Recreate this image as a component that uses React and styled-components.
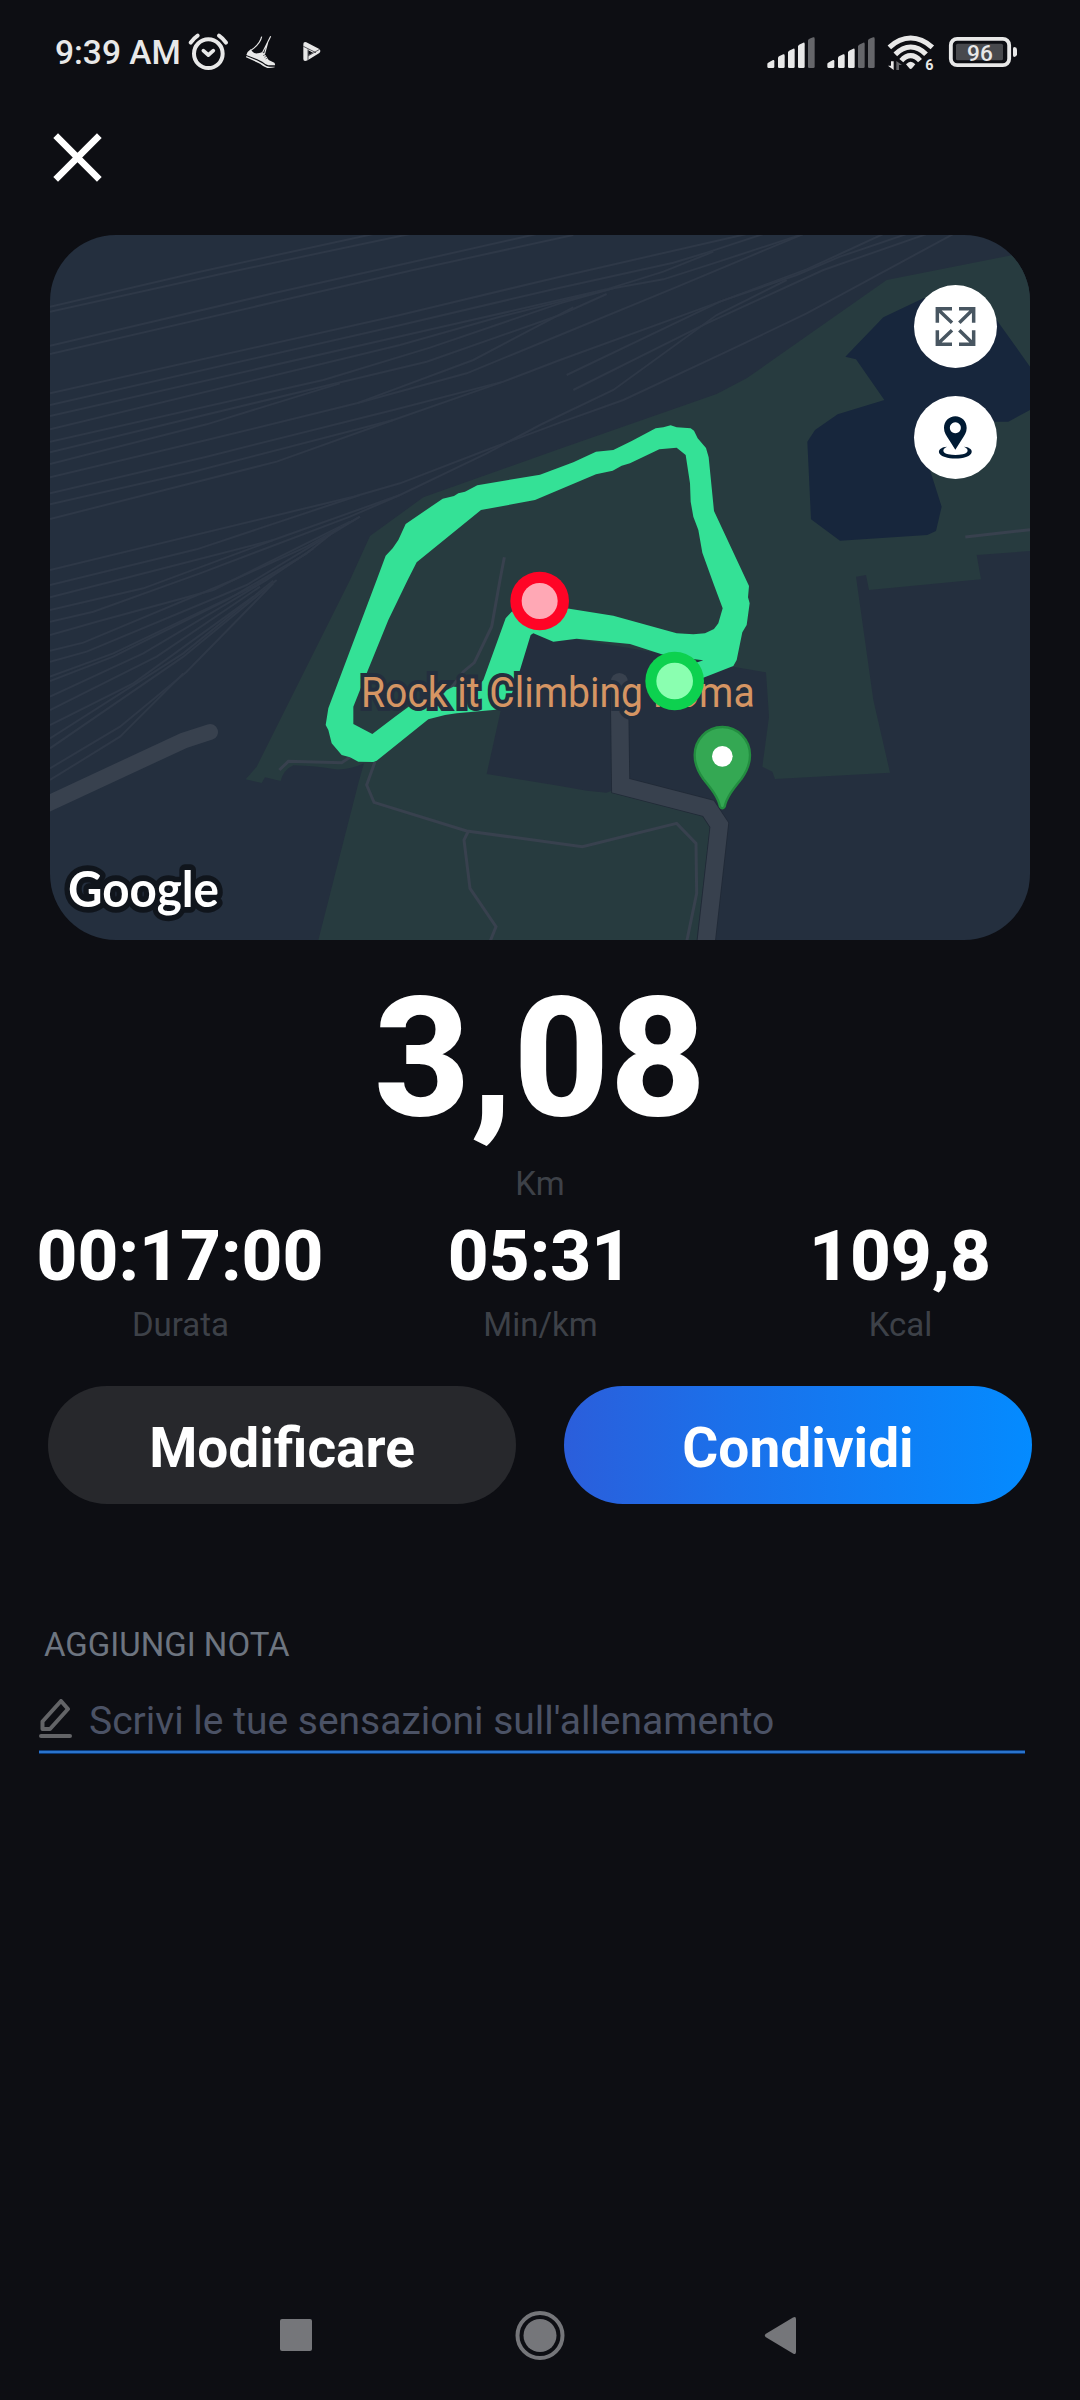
import React from "react";
import styled, { createGlobalStyle } from "styled-components";

const GlobalStyle = createGlobalStyle`
  * { box-sizing: border-box; }
  body { margin: 0; background: #0d0e13; }
  svg { display: block; }
`;

const Screen = styled.main`
  width: 1080px;
  height: 2400px;
  display: flex;
  flex-direction: column;
  background: #0d0e13;
  color: #fff;
  font-family: Roboto, "Liberation Sans", sans-serif;
  overflow: hidden;
`;

const StatusBar = styled.header`
  height: 105px;
  padding: 30px 60px 30px 55px;
  display: flex;
  justify-content: space-between;
`;

const StatusGroup = styled.div`
  display: flex;
`;

const IconGroup = styled(StatusGroup)`
  gap: 10px;
`;

const Clock = styled.span`
  width: 132px;
  font-size: 33.5px;
  font-weight: 500;
  line-height: 46px;
  color: #e8e8e8;
  white-space: nowrap;
`;

const StatusIcon = styled.svg`
  width: ${(p) => p.$w}px;
  height: 45px;
  margin-left: ${(p) => p.$ml || 0}px;
  fill: #e8e8e8;
`;

const TopBar = styled.div`
  height: 130px;
  padding: 25px 50px;
`;

const CloseButton = styled.button`
  width: 55px;
  height: 55px;
  padding: 0;
  border: 0;
  background: none;
`;

const MapCard = styled.section`
  position: relative;
  width: 980px;
  height: 705px;
  margin: 0 50px;
  border-radius: 66px;
  overflow: hidden;
  background: #242f3e;
`;

const MapControls = styled.div`
  position: absolute;
  top: 50px;
  right: 33px;
  display: flex;
  flex-direction: column;
  gap: 28px;
`;

const MapButton = styled.button`
  width: 83px;
  height: 83px;
  padding: 0;
  border: 0;
  border-radius: 50%;
  background: #fff;
`;

const Distance = styled.section`
  height: 263px;
  padding-top: 20px;
  display: flex;
  flex-direction: column;
  align-items: center;
`;

const DistanceValue = styled.div`
  font-size: 167px;
  line-height: 197px;
  font-weight: 800;
`;

const Label = styled.div`
  font-size: 33px;
  line-height: 40px;
  color: #3d4148;
`;

const DistanceLabel = styled(Label)`
  margin-top: 7px;
`;

const Stats = styled.section`
  display: grid;
  grid-template-columns: repeat(3, 360px);
  height: 183px;
  padding-top: 11px;
`;

const Stat = styled.div`
  display: flex;
  flex-direction: column;
  align-items: center;
`;

const StatValue = styled.div`
  font-size: 71px;
  line-height: 84px;
  font-weight: 800;
`;

const StatLabel = styled(Label)`
  margin: 7px 0 0 1px;
`;

const Actions = styled.section`
  display: flex;
  gap: 48px;
  padding: 0 48px;
`;

const ActionButton = styled.button`
  flex: 1;
  height: 118px;
  padding: 6px 0 0;
  border: 0;
  border-radius: 59px;
  background: ${(p) => (p.$primary ? "linear-gradient(90deg, #2b5edb, #1b70ea 35%, #048bff)" : "#27282c")};
  color: #fff;
  font: 700 55px/64px Roboto, "Liberation Sans", sans-serif;
`;

const Note = styled.section`
  padding: 121px 55px 0 39px;
`;

const NoteTitle = styled.h2`
  margin: 0 0 0 5px;
  font-size: 33px;
  line-height: 40px;
  font-weight: 400;
  color: #6d7580;
`;

const NoteField = styled.div`
  display: flex;
  align-items: flex-start;
  height: 85px;
  padding-top: 34px;
`;

const NoteUnderline = styled.div`
  height: 4px;
  border: solid #0b3a78;
  border-width: 1px 0;
  background: #2a74cd;
`;

const PencilIcon = styled.svg`
  width: 33px;
  height: 40px;
  margin-right: 17px;
`;

const Placeholder = styled.span`
  font-size: 39px;
  line-height: 44px;
  color: #4b5265;
  white-space: nowrap;
`;

const NavBar = styled.nav`
  margin-top: auto;
  height: 130px;
  padding: 0 284px 0 280px;
  display: grid;
  grid-template-columns: 1fr auto 1fr;
  align-items: center;
`;

const NavIcon = styled.svg`
  height: 50px;
  width: ${(p) => p.$w}px;
  justify-self: ${(p) => p.$align || "center"};
  fill: #75767a;
`;

const TRACKS = [
  "M30 260L480 155L1000 42", "M30 275L560 158L1110 42", "M30 377L700 220L1490 42",
  "M30 402L740 238L1120 150L1600 45", "M30 520L1080 285L1560 170L2120 42",
  "M30 555L1060 320L1560 203L1900 128L2000 98L2170 42", "M30 588L1200 322L1700 208L1870 155L2020 95",
  "M30 628L1080 375L1380 290L1720 205L1870 178L2020 130L2290 42", "M30 665L850 480L1170 383L1560 250L1720 205",
  "M30 697L880 492L1160 425L1560 285L1700 222", "M30 732L500 613L900 490",
  "M30 772L500 660L950 550L1280 460L1560 345L1900 205L2290 42", "M950 550L1300 420L1600 262",
  "M30 820L500 710L1060 570L1390 485L1560 420L2000 260L2300 148L2400 102L2530 42",
  "M30 853L460 755L1060 600L1390 485", "M30 897L710 725L1060 600",
  "M30 1050L940 830L1080 790L1340 690L1560 608L1750 540L2060 395L2300 280L2740 42",
  "M30 1095L470 988L960 825", "M30 1132L330 1055L700 960L1080 825L1340 700L1500 615L1720 510L2030 285L2240 180",
  "M30 1170L310 1105L700 960", "M30 1205L160 1175L480 1060L930 890L1080 825",
  "M30 1245L170 1205L520 1110L930 905", "M30 1292L130 1268L580 1080L800 980L960 890",
  "M30 1325L140 1295L620 1095L960 890", "M30 1370L220 1300L640 1100L800 1000L900 920",
  "M30 1383L220 1310L560 1140L800 1000", "M30 1430L310 1300L680 1080L820 985",
  "M30 1470L350 1310L660 1100", "M30 1515L280 1390L640 1130", "M30 1555L430 1300L700 1082",
  "M30 1585L430 1310L710 1080", "M30 1645L240 1520L440 1355L700 1090", "M30 1680L240 1550L430 1360",
  "M1580 465L2040 245L2270 165L2400 110L2600 42", "M1600 510L2000 310L2350 150L2660 42",
];

const PARK =
  "M617 1678L650 1640L930 1080L990 948L1150 832L1560 686L2030 522L2120 475L2540 180L2970 95V993L2810 1005L2823 1078L2487 1110L2478 1065L2448 1070L2500 1440L2550 1658L2205 1677L2197 1655L2167 1640L2187 1490L2178 1357L2080 1340L1860 1300L1610 1258L1480 1235L1420 1300L1340 1662L1560 1698L1640 1712L1700 1718L1720 1710L1990 1785L2010 1820L1970 2160H835L955 1690L972 1630Q930 1650 885 1648Q830 1638 760 1636Q730 1650 722 1683L675 1672L665 1689Z";

const WATER =
  "M2416 410L2530 292L2650 235L2820 240L2870 300L2970 440V570L2905 605H2800L2670 750L2705 860L2688 933L2662 945L2400 962L2313 898L2302 665L2325 630L2393 583L2533 540L2448 418Z";

const ROUTE =
  "M857 1515L865 1465L1010 1080L1037 1007L1058 985L1075 960L1097 912L1208 836L1242 828L1255 820L1275 815L1312 796L1500 764L1600 727L1668 695L1720 690L1775 663L1847 625L1870 622L1892 616L1910 622L1952 625L1962 632L1973 655L1998 684L2006 712L2022 873L2127 1098L2124 1132L2129 1150L2120 1215L2107 1237L2090 1320L2080 1338L1990 1373L1905 1400V1350L1990 1321L1965 1318L1865 1303L1770 1272L1610 1256L1540 1265L1480 1240L1472 1245L1440 1350L1400 1465L1360 1470L1250 1480L1215 1485L1165 1498L1010 1622L1000 1626L955 1625L930 1612L905 1605L875 1570L865 1530Z" +
  "M1103 1080L1045 1200L980 1360L940 1460V1512L997 1542L1065 1490L1120 1450L1200 1420L1240 1400L1310 1405L1330 1380L1397 1195L1415 1175L1560 1162L1720 1187L1910 1240L1960 1243L1995 1240L2022 1227L2035 1210L2048 1165L2020 1090L1987 998L1975 930L1960 890L1952 845L1950 790L1937 705L1910 683L1858 688L1770 730L1745 737L1718 752L1668 763L1485 840L1323 870L1130 1027Z";

function RouteMap() {
  return (
    <svg width="980" height="705" viewBox="30 45 2940 2115">
      <g fill="none" stroke="#2e3847" strokeWidth="6">
        {TRACKS.map((d) => <path key={d} d={d} />)}
      </g>
      <path d={PARK} fill="#273b3f" />
      <path d={WATER} fill="#17263c" />
      <g fill="none" stroke="#38414e" strokeWidth="9">
        <path d="M2776 951L2970 929" />
        <path d="M1393 1012L1380 1080L1355 1220L1303 1328L1270 1355L1230 1410" />
        <path d="M718 1650L745 1624L905 1628L940 1605" />
        <path d="M1005 1625L980 1695L1002 1747L1280 1833L1627 1880L1910 1810L1968 1870L1970 2020L1940 2165" />
        <path d="M1285 1833L1272 1860L1290 2005L1368 2120L1350 2165" />
      </g>
      <path d="M20 1753L430 1562L510 1536" fill="none" stroke="#38414e" strokeWidth="48" strokeLinecap="round" />
      <g fill="none">
        <path d="M1738 1385L1742 1697L2005 1765L2038 1815L1998 2170" stroke="#212a37" strokeWidth="57" />
        <path d="M1738 1385L1742 1697L2005 1765L2038 1815L1998 2170" stroke="#38414e" strokeWidth="52" />
        <path d="M1738 1385V1390" stroke="#38414e" strokeWidth="52" strokeLinecap="round" />
      </g>
      <path d={ROUTE} fill="#34e196" fillRule="evenodd" />
      <text x="963" y="1461" fontSize="126" fontFamily="Roboto, sans-serif" fill="#d59563" stroke="#242f3e" strokeWidth="24" paintOrder="stroke" textLength="1181" lengthAdjust="spacingAndGlyphs">
        Rock it Climbing Roma
      </text>
      <circle cx="1499" cy="1143" r="88" fill="#ff0426" />
      <circle cx="1499" cy="1143" r="54" fill="#ffa8b5" />
      <circle cx="1904" cy="1383" r="88" fill="#0dd14f" />
      <circle cx="1904" cy="1383" r="55" fill="#8affb0" />
      <path d="M2047 1521C2094 1521 2130 1560 2130 1605C2130 1636 2120 1655 2104 1677C2083 1703 2060 1730 2054 1760Q2047 1770 2040 1760C2034 1730 2011 1703 1990 1677C1974 1655 1964 1636 1964 1605C1964 1560 2000 1521 2047 1521Z" fill="#34a853" stroke="#238d40" strokeWidth="7" />
      <circle cx="2047" cy="1609" r="31" fill="#fff" />
      <text x="84" y="2062" fontSize="150" fontFamily="Lato, sans-serif" fontWeight="700" fill="#fff" stroke="#10151c" strokeWidth="34" strokeLinejoin="round" paintOrder="stroke" textLength="453" lengthAdjust="spacingAndGlyphs">
        Google
      </text>
    </svg>
  );
}

const SIGNAL_BARS = [
  "M82 161Q84 158 99 150Q103 149 103 154V170Q103 174 99 174H86Q82 174 82 170Z",
  "M114 143Q115 139 130 133Q134 132 134 137V170Q134 174 130 174H118Q114 174 114 170Z",
  "M144 126Q145 122 160 116Q164 115 164 120V170Q164 174 160 174H148Q144 174 144 170Z",
  "M174 108Q175 104 190 98Q194 97 194 102V170Q194 174 190 174H178Q174 174 174 170Z",
  "M204 91Q205 87 220 82Q224 81 224 86V170Q224 174 220 174H208Q204 174 204 170Z",
];

function SignalIcon({ level }) {
  return (
    <StatusIcon $w={50} viewBox="78 60 150 135">
      {SIGNAL_BARS.map((d, i) => <path key={d} d={d} fill={i < level ? "#e8e8e8" : "#65666a"} />)}
    </StatusIcon>
  );
}

function StatusIcons() {
  return (
    <StatusBar>
      <StatusGroup>
        <Clock>9:39 AM</Clock>
        <StatusIcon $w={43} viewBox="471 60 129 135">
          <g fill="none" stroke="#e8e8e8" strokeLinecap="round" strokeLinejoin="round">
            <circle cx="535" cy="131" r="43" strokeWidth="12" />
            <path d="M520 122L535 135L550 122" strokeWidth="11" />
            <path d="M482 98Q490 86 503 77M588 98Q580 86 567 77" strokeWidth="12" />
          </g>
        </StatusIcon>
        <StatusIcon $w={33} $ml={14} viewBox="642 60 99 135">
          <path d="M663 117C666 126 674 132 684 130Q692 128 697 126L704 132L710 140L716 150L733 158Q736 162 735 166L715 166Q706 163 697 155L682 148L649 135Q652 124 663 117Z" />
          <path d="M649 138L680 151L697 160Q708 170 718 170H734V172Q722 175 712 174Q700 170 690 161L648 142Z" />
          <path d="M695 80C691 99 680 109 664 120M722 79L698 127M713 98L703 134" fill="none" stroke="#e8e8e8" strokeWidth="3.5" />
          <path d="M699 137L708 133M703 142L711 138M707 147L714 143" stroke="#0d0e13" strokeWidth="1.5" />
        </StatusIcon>
        <StatusIcon $w={20} $ml={25} viewBox="816 60 60 135">
          <path d="M820 104Q819 94 829 97L868 117Q874 123 868 129L833 151Q820 156 820 147Z" />
          <path d="M820 109L858 128M834 151V118M834 138L869 118" stroke="#0d0e13" strokeWidth="2" fill="none" />
          <path d="M835 121L849 128L835 136Z" fill="#0d0e13" />
        </StatusIcon>
      </StatusGroup>
      <IconGroup>
        <SignalIcon level={4} />
        <SignalIcon level={3} />
        <StatusIcon $w={50} viewBox="438 60 150 135">
          <g fill="none" stroke="#e8e8e8" strokeWidth="15.5">
            <path d="M448 112Q478 84 512 84Q546 84 577 112" />
            <path d="M466 133Q488 111 512 111Q537 111 558 133" />
            <path d="M484 152Q497 137 512 137Q527 137 540 152" />
          </g>
          <path d="M498 163Q512 148 526 163L516 175Q512 179 508 175Z" />
          <path d="M453 154H461V180L444 167H453Z" />
          <path d="M469 180V153L486 165H477V180Z" fill="#65666a" />
          <text x="556" y="180" fontSize="43" fontWeight="700" fontFamily="Roboto, sans-serif">6</text>
        </StatusIcon>
        <StatusIcon $w={74} viewBox="618 60 222 135">
          <rect x="632.5" y="86.5" width="175" height="79" rx="19" fill="none" stroke="#e8e8e8" strokeWidth="11.5" />
          <rect x="648" y="101" width="141" height="50" rx="5" fill="#48494d" />
          <path d="M819 117Q819 111 823 111Q831 112 831 119V133Q831 140 823 141Q819 141 819 136Z" />
          <text x="720" y="152.500" fontSize="68" fontWeight="500" textAnchor="middle" fontFamily="Roboto, sans-serif">96</text>
        </StatusIcon>
      </IconGroup>
    </StatusBar>
  );
}

const STATS = [
  ["00:17:00", "Durata"],
  ["05:31", "Min/km"],
  ["109,8", "Kcal"],
];

export default function App() {
  return (
    <Screen>
      <GlobalStyle />
      <StatusIcons />
      <TopBar>
        <CloseButton aria-label="Chiudi">
          <svg width="55" height="55" viewBox="60 360 165 165">
            <path d="M77 377L208 508M208 377L77 508" stroke="#fff" strokeWidth="20" />
          </svg>
        </CloseButton>
      </TopBar>
      <MapCard>
        <RouteMap />
        <MapControls>
          <MapButton aria-label="Espandi">
            <svg width="83" height="83" viewBox="1122 195 249 249">
              <g fill="none" stroke="#485661" strokeWidth="10.5">
                <path d="M1236 266H1192V308M1192 266L1236 308" />
                <path d="M1257 266H1301V308M1301 266L1258 308" />
                <path d="M1236 373H1192V331M1192 373L1236 331" />
                <path d="M1257 373H1301V331M1301 373L1258 331" />
              </g>
            </svg>
          </MapButton>
          <MapButton aria-label="Posizione">
            <svg width="83" height="83" viewBox="1122 528 249 249">
              <path fill="#001a33" fillRule="evenodd" d="M1246 589C1265 589 1280 604 1280 624C1280 638 1273 647 1265 659L1246 689L1227 659C1219 647 1212 638 1212 624C1212 604 1227 589 1246 589ZM1246 607A16.500 16.500 0 1 0 1246.100 607Z" />
              <path fill="#001a33" d="M1221 680C1190 683 1190 703 1215 711C1233 717 1259 717 1278 711C1302 703 1302 683 1272 680C1288 687 1286 699 1268 703Q1246 707 1225 703C1207 699 1205 687 1221 680Z" />
            </svg>
          </MapButton>
        </MapControls>
      </MapCard>
      <Distance>
        <DistanceValue>3,08</DistanceValue>
        <DistanceLabel>Km</DistanceLabel>
      </Distance>
      <Stats>
        {STATS.map(([value, label]) => (
          <Stat key={label}>
            <StatValue>{value}</StatValue>
            <StatLabel>{label}</StatLabel>
          </Stat>
        ))}
      </Stats>
      <Actions>
        <ActionButton>Modificare</ActionButton>
        <ActionButton $primary>Condividi</ActionButton>
      </Actions>
      <Note>
        <NoteTitle>AGGIUNGI NOTA</NoteTitle>
        <NoteField>
          <PencilIcon viewBox="0 0 33 40" fill="none" stroke="#636467" strokeWidth="4" strokeLinejoin="round" strokeLinecap="round">
            <path d="M3.500 22.500L22 2L29 10L11 30H3.500Z" />
            <path d="M2 37H31" />
          </PencilIcon>
          <Placeholder>Scrivi le tue sensazioni sull'allenamento</Placeholder>
        </NoteField>
        <NoteUnderline />
      </Note>
      <NavBar>
        <NavIcon $w={32} $align="start" viewBox="0 0 32 50"><rect y="9" width="32" height="32" rx="2" /></NavIcon>
        <NavIcon $w={54} viewBox="-4 0 54 50">
          <circle cx="25" cy="25.500" r="22.500" fill="none" stroke="#75767a" strokeWidth="4" />
          <circle cx="25" cy="25.500" r="16.500" />
        </NavIcon>
        <NavIcon $w={32} $align="end" viewBox="0 0 32 50"><path d="M1.500 24Q0 25.500 1.500 27L29 43.500Q32 45 32 42V9Q32 6 29 7.500Z" /></NavIcon>
      </NavBar>
    </Screen>
  );
}
